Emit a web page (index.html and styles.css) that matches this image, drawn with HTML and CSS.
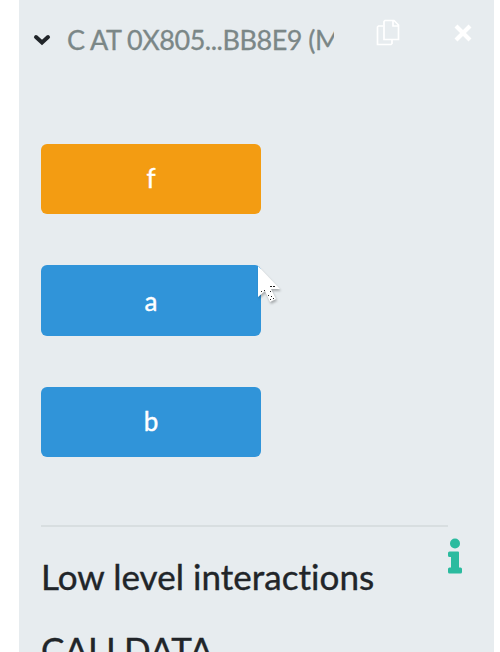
FILE: index.html
```html
<!DOCTYPE html>
<html lang="en">
<head>
<meta charset="utf-8">
<title>Deployed contract</title>
<link rel="stylesheet" href="styles.css">
</head>
<body>
<main class="panel">
  <header class="header">
    <svg class="chevron" viewBox="0 0 18 12"><path d="M3 3l6 5.500L15 3"/></svg>
    <span class="title">C AT 0X805...BB8E9 (M</span>
    <svg class="copy" viewBox="0 0 24 28"><path d="M9 1.500h9l4.500 4.500v14.500H8V2.500zM17 2v5h5M7 7H2.500L1.500 8v17.500H15l1-1V21"/></svg>
    <svg class="close" viewBox="0 0 18 18"><path d="M2 2l14 14M16 2L2 16"/></svg>
  </header>
  <div class="actions">
    <button class="btn write">f</button>
    <button class="btn tall">a</button>
    <button class="btn">b</button>
  </div>
  <section class="low">
    <svg class="info" viewBox="0 0 14 36"><circle cx="7" cy="5.500" r="5"/><path d="M1.500 13.500h8.500a1 1 0 0 1 1 1V29.500h1.500a1.500 1.500 0 0 1 1.500 1.500v3a1.500 1.500 0 0 1-1.500 1.500h-11A1.500 1.500 0 0 1 0 34v-3a1.500 1.500 0 0 1 1.500-1.500H3V19H1.500A1.500 1.500 0 0 1 0 17.500V15a1.500 1.500 0 0 1 1.500-1.500z"/></svg>
    <h2 class="heading">Low level interactions</h2>
    <div class="label">CALLDATA</div>
  </section>
</main>
<svg class="cursor" viewBox="0 0 24 40"><path d="M1 1v31l7-6 5 11 6-3-5-10h9z"/><path class="specks" d="M13 21.500h2m1 0h2M4 26.500h1m2-1h1m5 1h1m-3 4h1m2 1h1m-2 3h1m2-1h1"/></svg>
</body>
</html>
```
FILE: styles.css
```css
* { box-sizing: border-box; }
body {
  margin: 0;
  height: 652px;
  overflow: hidden;
  background: #fff;
  font-family: Lato, sans-serif;
}
.panel {
  width: 475px;
  height: 652px;
  margin-left: 19px;
  padding: 0 22px;
  overflow: hidden;
  background: #e7ecef;
}
.header {
  display: flex;
  height: 82px;
  margin-left: -8px;
}
.header svg, .info { flex: none; fill: none; }
.chevron {
  width: 18px;
  height: 12px;
  margin-top: 34px;
  stroke: #212529;
  stroke-width: 4;
  stroke-linecap: round;
}
.title {
  width: 267px;
  height: 34px;
  margin: 23px 0 0 16px;
  overflow: hidden;
  white-space: nowrap;
  font-size: 27px;
  line-height: 34px;
  letter-spacing: -0.48px;
  color: #7b8787;
  -webkit-text-stroke: 0.3px #7b8787;
}
.copy {
  width: 24px;
  height: 28px;
  margin: 19px 0 0 42px;
  stroke: #fff;
  stroke-width: 1.7;
}
.close {
  width: 18px;
  height: 18px;
  margin: 24px 0 0 54px;
  stroke: #fff;
  stroke-width: 4.2;
}
.actions {
  display: flex;
  flex-direction: column;
  gap: 51px;
  padding-top: 62px;
}
.btn {
  width: 220px;
  height: 70px;
  padding: 0 0 2px;
  border: 0;
  border-radius: 6px;
  background: #3094d9;
  color: #fff;
  font: 26px Lato, sans-serif;
  -webkit-text-stroke: 0.4px #fff;
}
.write { background: #f39c12; }
.tall { height: 71px; padding: 0; }
.low {
  display: flex;
  flex-direction: column;
  width: 407px;
  margin-top: 68px;
  border-top: 2px solid #d8dee0;
}
.info {
  width: 14px;
  height: 36px;
  margin: 11px -14px 0 0;
  align-self: flex-end;
}
.info circle, .info path { fill: #2bbb9f; }
.heading {
  margin: -20px 0 0;
  font-size: 35px;
  font-weight: 400;
  line-height: 44px;
  letter-spacing: 0.04px;
  color: #212529;
  white-space: nowrap;
  font-variant-ligatures: none;
  -webkit-text-stroke: 0.4px #212529;
}
.label {
  margin-top: 29px;
  font-size: 35px;
  line-height: 44px;
  color: #212529;
  -webkit-text-stroke: 0.4px #212529;
}
.cursor {
  position: absolute;
  left: 257px;
  top: 265px;
  width: 24px;
  height: 40px;
  fill: #fff;
  filter: drop-shadow(1px 2px 1px #0004);
}
.specks { stroke: #222; stroke-width: 1; }
```
